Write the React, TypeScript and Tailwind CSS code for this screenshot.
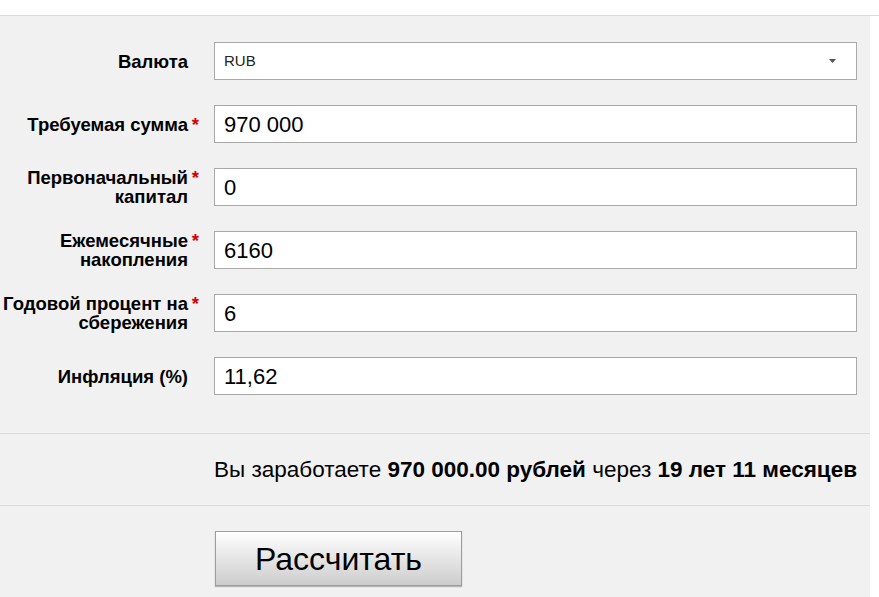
const rows = [
  { label: ["Требуемая сумма"], value: "970 000", req: true },
  { label: ["Первоначальный", "капитал"], value: "0", req: true },
  { label: ["Ежемесячные", "накопления"], value: "6160", req: true },
  { label: ["Годовой процент на", "сбережения"], value: "6", req: true },
  { label: ["Инфляция (%)"], value: "11,62", req: false },
];

function Label({ lines, req }: { lines: string[]; req: boolean }) {
  return (
    <div className="relative w-[188px] shrink-0 text-right text-[18.5px] font-bold leading-[19px] text-black">
      {lines.map((l) => (
        <div key={l} className="whitespace-nowrap">
          {l}
        </div>
      ))}
      {req && <span className="absolute -right-[11px] top-0 text-[#d40000]">*</span>}
    </div>
  );
}

export default function App() {
  return (
    <div className="h-[597px] w-[879px] overflow-hidden bg-white font-['Liberation_Sans',Arial,sans-serif]">
      <div className="h-[16px] border-b border-[#dcdcdc] bg-white" />
      <div className="w-[870px] bg-[#f1f1f1]">
        <div className="flex flex-col gap-[25px] pt-[26px] pb-[38px]">
          <div className="flex items-center gap-[26px]">
            <Label lines={["Валюта"]} req={false} />
            <div className="flex h-[38px] w-[643px] items-center justify-between border border-[#a9a9a9] bg-white pl-[9px] pr-[20px]">
              <span className="text-[15px] text-[#222]">RUB</span>
              <svg width="7" height="4" viewBox="0 0 7 4">
                <path d="M0 0h7L3.5 4z" fill="#555" />
              </svg>
            </div>
          </div>
          {rows.map((r) => (
            <div key={r.value} className="flex items-center gap-[26px]">
              <Label lines={r.label} req={r.req} />
              <div className="flex h-[38px] w-[643px] items-center border border-[#a9a9a9] bg-white pl-[9px]">
                <span className="text-[22px] text-black">{r.value}</span>
              </div>
            </div>
          ))}
        </div>
        <div className="border-t border-[#dcdcdc]" />
        <div className="flex h-[71px] items-center justify-end pr-[13px] text-[22.5px] text-black">
          <span>
            Вы заработаете <b>970 000.00 рублей</b> через <b>19 лет 11 месяцев</b>
          </span>
        </div>
        <div className="border-t border-[#dcdcdc]" />
        <div className="pl-[215px] pt-[25px] pb-[20px]">
          <button className="h-[55px] w-[247px] border border-[#9d9d9d] bg-gradient-to-b from-white to-[#cdcdcd] text-[32px] text-black shadow-[0_1px_1px_rgba(0,0,0,0.25)]">
            Рассчитать
          </button>
        </div>
      </div>
    </div>
  );
}
